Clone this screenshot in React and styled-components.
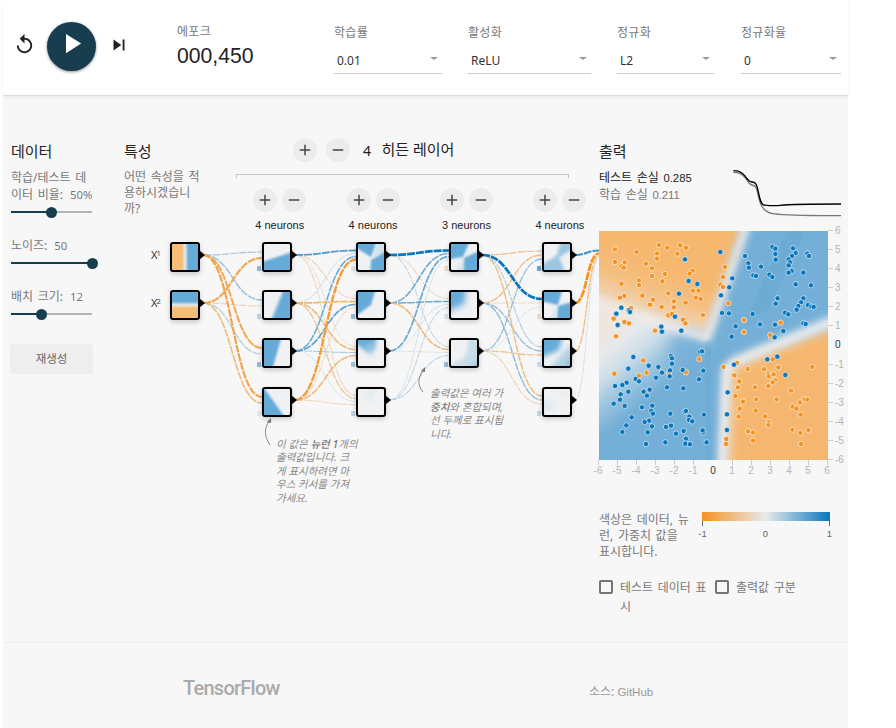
import React from 'react';
import styled, { createGlobalStyle } from 'styled-components';

const ORANGE = [245, 147, 34];
const NEUTRAL = [232, 234, 235];
const BLUE = [8, 119, 189];

const GlobalStyle = createGlobalStyle`
  *, *::before, *::after { box-sizing: border-box; }
  body {
    margin: 0;
    background: #fff;
    color: #222;
    font-family: "Noto Sans", "Noto Sans CJK KR", sans-serif;
    font-size: 12px;
    overflow: hidden;
  }
  filter { color-interpolation-filters: sRGB; }
`;

const Page = styled.div`
  display: flex;
  flex-direction: column;
  width: 845px;
  height: 728px;
  margin-left: 3px;
  background: #f7f7f7;
`;

const Header = styled.header`
  display: flex;
  align-items: flex-start;
  height: 96px;
  flex: none;
  background: #fff;
  border-bottom: 1px solid #dcdcdc;
  box-shadow: 0 1px 3px rgba(0, 0, 0, 0.06);
`;

const Playback = styled.div`
  display: flex;
  align-items: center;
  width: 174px;
  height: 49px;
  margin-top: 22px;
  padding-left: 10px;
`;

const IconButton = styled.button`
  display: flex;
  padding: 0;
  margin: 0 0 4px;
  border: 0;
  background: none;
  color: #222;
`;

const PlayButton = styled.button`
  display: flex;
  align-items: center;
  justify-content: center;
  width: 49px;
  height: 49px;
  margin: 0 12px 0 11px;
  padding: 0 0 6px;
  border: 0;
  border-radius: 50%;
  background: #183d4e;
  color: #fff;
  box-shadow: 0 1px 3px rgba(0, 0, 0, 0.45);
`;

const Epoch = styled.div`
  display: flex;
  flex-direction: column;
  width: 157px;
  padding-top: 24px;
`;

const Label = styled.span`
  font-size: 12px;
  line-height: 16px;
  letter-spacing: 0.3px;
  color: #777;
`;

const EpochValue = styled.span`
  font: 21.2px/24px "Liberation Sans", sans-serif;
  margin-top: 4px;
  color: #222;
`;

const Field = styled.div`
  display: flex;
  flex-direction: column;
  width: ${(p) => p.$width}px;
  margin-right: ${(p) => p.$gap}px;
  padding-top: 25px;
`;

const Select = styled.div`
  display: flex;
  justify-content: space-between;
  height: 25px;
  margin-top: 8px;
  padding: 0 4px 0 3px;
  border-bottom: 1px solid #ccc;
  font-size: 12px;
  line-height: 24px;
  color: #333;
`;

const Caret = styled.span`
  width: 0;
  height: 0;
  margin-top: 8px;
  border: 4px solid transparent;
  border-top: 3px solid #999;
  border-bottom: 0;
`;

const Main = styled.main`
  display: flex;
  height: 546px;
  flex: none;
`;

const Heading = styled.h4`
  margin: 0;
  font-size: 15px;
  line-height: 20px;
  font-weight: 400;
  color: #222;
`;

const Line = styled.span`
  display: block;
  height: ${(p) => p.$h || 16}px;
  font-size: 12px;
  line-height: ${(p) => p.$h || 16}px;
  color: ${(p) => p.$color || '#777'};
  white-space: pre;
  word-spacing: 1.5px;
`;

const DataColumn = styled.section`
  display: flex;
  flex-direction: column;
  width: 121px;
  padding: 45px 0 0 8px;
`;

const SliderGroup = styled.div`
  display: flex;
  flex-direction: column;
  margin-bottom: ${(p) => p.$after}px;
`;

const SliderValue = styled.span`
  margin-left: 7px;
  font-size: 11.3px;
`;

const Track = styled.div`
  display: flex;
  align-items: center;
  width: 81px;
  height: 12px;
  margin-top: 3px;
  background: linear-gradient(#b4b4b4, #b4b4b4) center / 100% 2px no-repeat;
`;

const TrackFill = styled.div`
  display: flex;
  align-items: center;
  justify-content: flex-end;
  flex: none;
  width: ${(p) => p.$value}px;
  height: 2px;
  background: #183d4e;
`;

const Knob = styled.span`
  width: 11px;
  height: 11px;
  margin-right: -6px;
  flex: none;
  border-radius: 50%;
  background: #183d4e;
`;

const Regenerate = styled.button`
  width: 83px;
  height: 30px;
  margin: 0 0 0 -1px;
  padding: 0;
  border: 0;
  border-radius: 2px;
  background: #eee;
  color: #666;
  font: 11.5px/30px "Noto Sans", "Noto Sans CJK KR", sans-serif;
`;

const NetworkColumn = styled.section`
  width: 475px;
  display: flex;
  flex-direction: column;
`;

const NetworkHead = styled.div`
  display: flex;
  height: 144px;
`;

const Features = styled.div`
  flex: none;
  width: 109px;
  padding-top: 45px;
`;

const FeatureText = styled.div`
  margin-top: 8px;
`;

const Layers = styled.div`
  display: flex;
  flex: none;
  flex-direction: column;
  width: 374px;
`;

const LayersTitle = styled.div`
  display: flex;
  align-items: center;
  gap: 8.5px;
  height: 24px;
  margin: 42px 0 0 60px;

  h4 { margin-bottom: 2px; }
`;

const LayerCount = styled.span`
  margin: 0 2px 0 5px;
  font-size: 14px;
`;

const Round = styled.button`
  display: flex;
  align-items: center;
  justify-content: center;
  width: 24px;
  height: 24px;
  padding: 0;
  border: 0;
  border-radius: 50%;
  background: #ececec;
  color: #444;
`;

const Bracket = styled.div`
  width: 333px;
  height: 4px;
  margin: 12px 0 10px 3px;
  border: 1px solid #c4c4c4;
  border-bottom: 0;
`;

const LayerControls = styled.div`
  display: grid;
  grid-template-columns: repeat(4, 93.4px);
`;

const LayerControl = styled.div`
  display: flex;
  flex-wrap: wrap;
  justify-content: center;
  gap: 5px;
`;

const NeuronCount = styled.span`
  width: 100%;
  margin-top: 1px;
  text-align: center;
  font: 11px/14px "Liberation Sans", sans-serif;
  color: #222;
`;

const Diagram = styled.div`
  position: relative;
  width: 475px;
  height: 280px;
`;

const Links = styled.svg`
  position: absolute;
  left: 0;
  top: 0;
  overflow: visible;
`;

const Node = styled.div`
  position: absolute;
  left: ${(p) => p.$x}px;
  top: ${(p) => p.$y}px;
  width: 30px;
  height: 30px;
  border: 2px solid #000;
  border-radius: 3px;
  background: #f0f1f3;
  box-shadow: 0 2px 5px rgba(0, 0, 0, 0.2);

  svg { display: block; }

  &::after {
    content: "";
    position: absolute;
    left: 27px;
    top: 6px;
    border: 5px solid transparent;
    border-left: 6px solid #000;
    border-right: 0;
  }
`;

const FeatureName = styled.span`
  position: absolute;
  left: 27px;
  top: ${(p) => p.$y}px;
  font-size: 11px;
  line-height: 14px;
  color: #333;

  sup {
    font-size: 7.5px;
    line-height: 0;
    vertical-align: 3px;
    margin-left: -1px;
  }
`;

const Callout = styled.div`
  position: absolute;
  left: ${(p) => p.$x}px;
  top: ${(p) => p.$y}px;
  font-size: 10.5px;
  line-height: 13.6px;
  font-style: italic;
  color: #888;
  white-space: pre;

  b { font-weight: 500; color: #777; }
`;

const OutputColumn = styled.section`
  display: flex;
  flex-direction: column;
  width: 249px;
  padding-top: 45px;
`;

const Metrics = styled.div`
  display: flex;
  justify-content: space-between;
  height: 70px;
`;

const Loss = styled.div`
  padding-top: 8px;
`;

const Num = styled.span`
  font: ${(p) => p.$size || 11.3}px "Liberation Sans", sans-serif;
`;

const LossChart = styled.svg`
  margin: 7px 5px 0 0;
`;

const Heatmap = styled.svg`
  display: block;
  flex: none;
  overflow: visible;
`;

const LegendRow = styled.div`
  display: flex;
  gap: 8px;
  margin-top: 32px;
`;

const LegendText = styled.div`
  width: 92px;
`;

const LegendScale = styled.svg`
  overflow: visible;
`;

const Options = styled.div`
  display: flex;
  margin-top: 18px;
`;

const Option = styled.label`
  display: flex;
  width: ${(p) => p.$width}px;
`;

const Box = styled.span`
  width: 14px;
  height: 14px;
  margin: 2px 7px 0 0;
  flex: none;
  border: 2px solid #757575;
  border-radius: 2px;
`;

const Footer = styled.footer`
  display: flex;
  flex: 1;
  align-items: flex-start;
  border-top: 1px solid #ececec;
  padding: 32px 0 0 180px;
`;

const Wordmark = styled.span`
  width: 406px;
  font: 500 20px/26px Roboto, sans-serif;
  letter-spacing: -0.75px;
  color: #aaa;
`;

const Source = styled.span`
  margin-top: 8px;
  font-size: 12px;
  line-height: 18px;
  color: #999;
`;

const mix = (v) => {
  const end = v < 0 ? ORANGE : BLUE;
  const t = Math.abs(v);
  return `rgb(${NEUTRAL.map((c, i) => Math.round(c + (end[i] - c) * t)).join(',')})`;
};

const COLUMN_X = [46, 138, 232, 325, 418];
const ROW_Y = [2, 50, 98, 147];

// weights[layer][source][destination], negative is orange
const WEIGHTS = [
  [[0.3, 0.4, -0.75, -0.8], [-0.78, -0.25, 0.28, -0.55]],
  [
    [0.68, -0.25, -0.15, -0.22],
    [0.16, -0.6, -0.55, -0.4],
    [0.55, 0.6, 0.28, 0.1],
    [-0.88, -0.2, -0.55, -0.22],
  ],
  [
    [1, -0.22, 0.18],
    [0.55, 0.55, -0.55],
    [0.58, 0.1, 0.07],
    [0.1, 0.18, 0.22],
  ],
  [
    [-0.42, 1, 0.25, -0.5],
    [-0.5, -0.22, 0.4, 0.42],
    [0.38, 0.07, -0.42, -0.28],
  ],
  [[0.75], [-1], [-0.5], [0.1]],
];

const BIASES = [
  [0.4, 0.2, 0.4, 0.02],
  [0.08, 0.38, 0.3, 0.2],
  [-0.15, 0.05, 0.38],
  [0.55, -0.15, 0.12, 0.16],
];

const N = '#66aad8';
const P = '#9cc6e2';
const F = '#d3e3ed';

// shapes drawn in the 26 x 26 preview of each neuron: [points, fill, blur]
const PREVIEWS = [
  [
    [['-8,20 34,6 34,34 -8,34', N, 1]],
    [['22,-8 34,-8 34,34 5,34', N, 1.4]],
    [['-8,-8 19,-8 7,34 -8,34', N, 1]],
    [['-8,-10 0,-1 25,34 -8,34', N, 1]],
  ],
  [
    [['-8,-8 19,-8 17,3 13,13 -8,0', N, 1], ['21,-8 34,-8 34,8 15,12', F, 1.5], ['13,16 34,4 34,34 12,34', N, 1]],
    [['-8,-8 19,-8 13,13 -8,28', N, 1.2]],
    [['-8,-8 20,-8 16,8 10,12 -8,0', N, 2], ['6,4 18,4 13,16', P, 2.5]],
    [['12,-8 20,-8 13,13 9,10', '#e0eaf0', 2]],
  ],
  [
    [['-8,-8 21,-8 12,13 -8,16', N, 1.1], ['13,14 34,4 34,34 11,34', N, 1.1], ['12,12 2,34 12,34', F, 2]],
    [['-12,-12 17,-12 13,12 -12,24', N, 3.2]],
    [['20,-8 34,-8 34,34 -8,34 -8,30 14,17', '#c9deeb', 1.8], ['36,12 36,36 16,36', '#7db5da', 4]],
  ],
  [
    [['18,-8 34,-8 34,2 12,15', P, 1.5], ['-8,24 14,11 24,34 -8,34', P, 1.8]],
    [['-8,-8 20,-8 14,13 -8,8', N, 1.1], ['14,14 34,8 34,34 12,34', N, 1.1], ['12,14 4,34 12,34', F, 1.5]],
    [['-8,-8 20,-8 15,10 -8,20', N, 2.6], ['28,3 34,34 0,34 14,18', '#b5d3e7', 2], ['34,8 34,34 18,34', '#7db5da', 3]],
    [['-8,8 8,13 11,19 -8,28', '#dfe9ef', 2], ['16,0 24,2 20,10', '#e6ecf0', 2]],
  ],
];

// plot points in thirds of a pixel
const UPPER_ORANGE = [[75,343],[140,351],[207,330],[232,338],[270,331],[288,338],[262,356],[201,355],[201,371],[75,381],[104,382],[94,394],[101,398],[168,386],[186,400],[186,423],[225,417],[217,439],[147,436],[147,450],[94,446],[308,407],[299,416],[405,396],[399,426],[391,449],[399,456],[309,467],[326,467],[318,488],[332,492],[235,475],[157,482],[103,483],[90,488],[189,494],[180,509],[252,499],[287,503],[215,516],[252,517],[123,519],[235,541],[246,537],[339,540],[279,554],[286,565],[71,551],[103,561],[117,565],[195,587],[78,604],[415,505],[462,555],[462,591],[572,563],[544,606],[541,600]];
const UPPER_BLUE = [[285,373],[296,438],[322,447],[267,476],[94,518],[117,526],[120,531],[79,536],[83,570],[255,545],[214,575],[216,590],[274,587],[391,351],[427,430],[418,457],[393,481],[396,534],[417,535],[488,537],[437,574],[425,605],[510,568],[465,363],[475,385],[477,398],[513,395],[490,421],[498,423],[538,419],[547,426],[547,336],[556,341],[556,357],[557,374],[609,340],[617,354],[606,363],[652,356],[657,363],[596,373],[600,382],[596,391],[605,408],[596,413],[640,413],[617,448],[663,451],[563,490],[557,506],[640,490],[633,502],[625,513],[620,524],[654,510],[664,515],[671,516],[585,533],[595,538],[555,569],[580,588],[554,607],[640,565],[647,567]];
const LOWER_ORANGE = [[160,76],[73,116],[147,122],[170,113],[237,114],[288,112],[328,72],[400,96],[441,84],[473,102],[522,102],[565,97],[548,73],[667,96],[433,121],[448,139],[535,117],[536,124],[551,118],[555,136],[548,142],[535,153],[444,157],[495,157],[603,167],[436,183],[459,200],[499,193],[560,193],[644,193],[652,194],[630,202],[608,215],[619,221],[449,221],[497,227],[632,239],[446,245],[525,244],[537,262],[535,270],[474,289],[489,292],[607,284],[655,285],[631,294],[409,312],[408,327],[489,317],[633,327]];
const LOWER_BLUE = [[130,66],[115,101],[176,92],[205,96],[243,63],[246,70],[246,86],[240,106],[216,113],[198,128],[239,124],[278,105],[330,50],[336,49],[340,107],[327,133],[137,132],[147,139],[110,143],[97,150],[75,153],[115,170],[92,178],[90,194],[71,206],[104,213],[161,170],[179,164],[171,182],[231,157],[280,160],[156,217],[187,212],[184,228],[189,236],[125,247],[109,271],[97,291],[241,236],[284,230],[288,228],[342,239],[298,245],[297,255],[307,259],[177,257],[164,261],[186,274],[173,292],[228,276],[243,272],[258,296],[281,288],[340,292],[338,286],[288,311],[286,326],[300,328],[168,327],[226,322],[350,322],[532,73],[562,65],[432,89],[413,172],[411,238],[411,285],[586,120]];

const HEAT_TICKS = [-6, -5, -4, -3, -2, -1, 0, 1, 2, 3, 4, 5, 6];

const Icon = ({ size, d }) => (
  <svg width={size} height={size} viewBox="0 0 24 24" fill="currentColor">
    <path d={d} />
  </svg>
);

const Plus = () => <Icon size={18} d="M19 13h-6v6h-2v-6H5v-2h6V5h2v6h6v2z" />;
const Minus = () => <Icon size={18} d="M19 13H5v-2h14v2z" />;

const LinkLayer = () => (
  <Links width="475" height="280">
    {WEIGHTS.map((layer, l) => {
      const links = layer.flatMap((targets, s) =>
        targets.map((w, t) => {
          const x1 = COLUMN_X[l] + 33;
          const y1 = ROW_Y[s] + 13;
          const x2 = l === 4 ? 475 : COLUMN_X[l + 1];
          const n = layer.length;
          const y2 = ROW_Y[t] + 13 + ((s - (n - 1) / 2) / n) * 12;
          const mx = (x1 + x2) / 2;
          return { w, key: `${l}-${s}-${t}`, d: `M${x1},${y1}C${mx},${y1} ${mx},${y2} ${x2},${y2}` };
        })
      );
      return links
        .sort((a, b) => Math.abs(a.w) - Math.abs(b.w))
        .map(({ key, w, d }) => (
          <path key={key} d={d} fill="none" stroke={mix(w)} strokeWidth={0.9 + 1.8 * Math.abs(w) ** 1.6} strokeDasharray="8 1" />
        ));
    })}
    {BIASES.map((layer, l) =>
      layer.map((b, i) => (
        <rect key={`${l}-${i}`} x={COLUMN_X[l + 1] - 5} y={ROW_Y[i] + 24} width="4" height="5" fill={mix(b)} />
      ))
    )}
    <g fill="none" stroke="#888">
      <path d="M146,205C140,196 140,189 145,181" />
      <path d="M299,152C293,145 294,138 299,130" />
    </g>
    <path d="M147,178l-4,4 4,1z M301,127l-4,4 4,1z" fill="#777" />
  </Links>
);

const Preview = ({ shapes, id }) => (
  <svg width="26" height="26">
    {shapes.map(([points, fill, blur], i) => (
      <g key={i}>
        <filter id={`${id}-${i}`} x="-50%" y="-50%" width="200%" height="200%">
          <feGaussianBlur stdDeviation={blur} />
        </filter>
        <polygon points={points} fill={fill} filter={`url(#${id}-${i})`} />
      </g>
    ))}
  </svg>
);

const FeaturePreview = ({ id, vertical }) => (
  <svg width="26" height="26">
    <linearGradient id={id} x1={vertical ? 0 : 1} y1="0" x2="0" y2={vertical ? 1 : 0}>
      <stop offset="0.36" stopColor={N} />
      <stop offset="0.5" stopColor="#e8eaeb" />
      <stop offset="0.62" stopColor="#f7bd78" />
    </linearGradient>
    <rect width="26" height="26" fill={`url(#${id})`} />
  </svg>
);

const Dots = ({ points, fill }) =>
  points.map(([x, y], i) => (
    <circle key={i} cx={x} cy={y} r="8" fill={fill} stroke="#fff" strokeWidth="3" strokeOpacity="0.6" />
  ));

const OutputPlot = () => (
  <Heatmap width="249" height="249">
    <defs>
      <clipPath id="plot"><rect width="229" height="229" /></clipPath>
      <filter id="fine" x="-30%" y="-30%" width="160%" height="160%"><feGaussianBlur stdDeviation="3" /></filter>
      <filter id="soft" x="-30%" y="-30%" width="160%" height="160%"><feGaussianBlur stdDeviation="4.5" /></filter>
      <filter id="softer" x="-30%" y="-30%" width="160%" height="160%"><feGaussianBlur stdDeviation="7" /></filter>
      <linearGradient id="lowerLeft" gradientUnits="userSpaceOnUse" x1="16" y1="92" x2="72" y2="162">
        <stop offset="0" stopColor="#efe6dd" />
        <stop offset="0.2" stopColor="#e6e9eb" />
        <stop offset="0.4" stopColor="#cfdfe9" />
        <stop offset="0.62" stopColor="#9fc7e0" />
        <stop offset="0.9" stopColor="#74afd7" />
      </linearGradient>
      <linearGradient id="upperLeft" gradientUnits="userSpaceOnUse" x1="80" y1="42" x2="62" y2="92">
        <stop offset="0" stopColor="#f6b76f" />
        <stop offset="0.5" stopColor="#f4c083" />
        <stop offset="1" stopColor="#eedcc8" />
      </linearGradient>
    </defs>
    <g clipPath="url(#plot)">
      <rect width="229" height="229" fill="#74afd7" />
      <polygon points="0,60 110,98 112,229 0,229" fill="url(#lowerLeft)" />
      <polygon points="113,72 108,140 66,132 74,108" fill="#74afd7" filter="url(#softer)" opacity="0.8" />
      <polygon points="-20,-20 149,-20 108,104 -20,60" fill="url(#upperLeft)" filter="url(#soft)" />
      <path d="M-10,69L108,107L149,-10" fill="none" stroke="#efeceb" strokeWidth="10" opacity="0.5" filter="url(#soft)" />
      <path d="M40,86L108,107L149,-10" fill="none" stroke="#efeceb" strokeWidth="5" filter="url(#fine)" />
      <polygon points="129,134 260,86 260,250 124,250" fill="#f5b76f" filter="url(#soft)" />
      <path d="M125,240L129,141Q131,133 147,127L240,88" fill="none" stroke="#eeeeef" strokeWidth="14" opacity="0.5" filter="url(#soft)" />
      <path d="M123,240L127,141Q129,133 145,127L240,88" fill="none" stroke="#eeeeef" strokeWidth="7" filter="url(#fine)" />
      <polygon points="188,0 206,0 168,80 148,87" fill="#4c99cf" opacity="0.18" />
      <rect x="106" y="110" width="6" height="119" fill="#4c99cf" opacity="0.14" />
      <g transform="translate(-9 -96) scale(0.33333)">
        <Dots points={UPPER_ORANGE} fill="#f59322" />
        <Dots points={UPPER_BLUE} fill="#0877bd" />
      </g>
      <g transform="translate(-9 104) scale(0.33333)">
        <Dots points={LOWER_ORANGE} fill="#f59322" />
        <Dots points={LOWER_BLUE} fill="#0877bd" />
      </g>
    </g>
    <g fontFamily="Liberation Sans, sans-serif" fontSize="10" stroke="none">
      {HEAT_TICKS.map((t) => {
        const p = Math.round(((t + 6) * 229) / 12);
        return (
          <g key={t} fill={t === 0 ? '#333' : '#b5b5b5'}>
            {t !== 0 && <rect x={p - 1} y="229" width="1" height="5" fill="#ccc" />}
            <text x={p - 1} y="243" textAnchor="middle">{t}</text>
            {t !== 0 && <rect x="229" y={229 - p - 1} width="5" height="1" fill="#ccc" />}
            <text x="236" y={229 - p + 2.5}>{t}</text>
          </g>
        );
      })}
    </g>
  </Heatmap>
);

const FIELDS = [
  ['학습률', '0.01', 108, 26],
  ['활성화', 'ReLU', 123, 26],
  ['정규화', 'L2', 97, 27],
  ['정규화율', '0', 100, 0],
];

export default function App() {
  return (
    <>
      <GlobalStyle />
      <Page>
        <Header>
          <Playback>
            <IconButton>
              <Icon size={23} d="M12 5V1L7 6l5 5V7c3.31 0 6 2.69 6 6s-2.69 6-6 6-6-2.69-6-6H4c0 4.42 3.58 8 8 8s8-3.58 8-8-3.58-8-8-8z" />
            </IconButton>
            <PlayButton>
              <Icon size={33} d="M8 5v14l11-7z" />
            </PlayButton>
            <IconButton>
              <Icon size={22} d="M6 18l8.5-6L6 6v12zM16 6v12h2V6h-2z" />
            </IconButton>
          </Playback>
          <Epoch>
            <Label>에포크</Label>
            <EpochValue>000,450</EpochValue>
          </Epoch>
          {FIELDS.map(([name, value, width, gap]) => (
            <Field key={name} $width={width} $gap={gap}>
              <Label>{name}</Label>
              <Select>{value}<Caret /></Select>
            </Field>
          ))}
        </Header>

        <Main>
          <DataColumn>
            <Heading>데이터</Heading>
            <SliderGroup $after={19}>
              <Line $h={8} />
              <Line $h={17}>학습/테스트 데</Line>
              <Line $h={17}>이터 비율:<SliderValue>50%</SliderValue></Line>
              <Track><TrackFill $value={40}><Knob /></TrackFill></Track>
            </SliderGroup>
            <SliderGroup $after={19}>
              <Line $h={17}>노이즈:<SliderValue>50</SliderValue></Line>
              <Track><TrackFill $value={81}><Knob /></TrackFill></Track>
            </SliderGroup>
            <SliderGroup $after={24}>
              <Line $h={17}>배치 크기:<SliderValue>12</SliderValue></Line>
              <Track><TrackFill $value={30}><Knob /></TrackFill></Track>
            </SliderGroup>
            <Regenerate>재생성</Regenerate>
          </DataColumn>

          <NetworkColumn>
            <NetworkHead>
              <Features>
                <Heading>특성</Heading>
                <FeatureText>
                  <Line>어떤 속성을 적</Line>
                  <Line>용하시겠습니</Line>
                  <Line>까?</Line>
                </FeatureText>
              </Features>
              <Layers>
                <LayersTitle>
                  <Round><Plus /></Round>
                  <Round><Minus /></Round>
                  <LayerCount>4</LayerCount>
                  <Heading>히든 레이어</Heading>
                </LayersTitle>
                <Bracket />
                <LayerControls>
                  {[4, 4, 3, 4].map((count, i) => (
                    <LayerControl key={i}>
                      <Round><Plus /></Round>
                      <Round><Minus /></Round>
                      <NeuronCount>{count} neurons</NeuronCount>
                    </LayerControl>
                  ))}
                </LayerControls>
              </Layers>
            </NetworkHead>
            <Diagram>
              <LinkLayer />
              <FeatureName $y={8}>X<sup>1</sup></FeatureName>
              <FeatureName $y={56}>X<sup>2</sup></FeatureName>
              <Node $x={46} $y={2}><FeaturePreview id="x1" /></Node>
              <Node $x={46} $y={50}><FeaturePreview id="x2" vertical /></Node>
              {PREVIEWS.map((layer, l) =>
                layer.map((shapes, i) => (
                  <Node key={`${l}-${i}`} $x={COLUMN_X[l + 1]} $y={ROW_Y[i]}>
                    <Preview shapes={shapes} id={`n${l}${i}`} />
                  </Node>
                ))
              )}
              <Callout $x={152} $y={197.5}>
                이 값은 <b>뉴런 1</b>개의{'\n'}출력값입니다. 크{'\n'}게 표시하려면 마{'\n'}우스 커서를 가져{'\n'}가세요.
              </Callout>
              <Callout $x={306} $y={147}>
                출력값은 여러 가{'\n'}<b>중치</b>와 혼합되며,{'\n'}선 두께로 표시됩{'\n'}니다.
              </Callout>
            </Diagram>
          </NetworkColumn>

          <OutputColumn>
            <Heading>출력</Heading>
            <Metrics>
              <Loss>
                <Line $h={17} $color="#222">테스트 손실 <Num>0.285</Num></Line>
                <Line $h={17}>학습 손실 <Num>0.211</Num></Line>
              </Loss>
              <LossChart width="110" height="50" viewBox="429 99 330 150" fill="none" strokeWidth="4">
                <path d="M430,112C446,112 455,116 464,126S476,148 486,150S499,154 504,178S515,228 545,235S620,241 753,242" stroke="#777" />
                <path d="M430,107C446,107 456,112 464,122S476,140 486,141S499,144 504,166S512,209 522,210S550,213 570,211S650,207 753,207" stroke="#000" />
              </LossChart>
            </Metrics>
            <OutputPlot />
            <LegendRow>
              <LegendText>
                <Line>색상은 데이터, 뉴</Line>
                <Line>런, 가중치 값을</Line>
                <Line>표시합니다.</Line>
              </LegendText>
              <LegendScale width="136" height="30">
                <linearGradient id="legend">
                  <stop offset="0" stopColor="#f59322" />
                  <stop offset="0.5" stopColor="#e8eaeb" />
                  <stop offset="1" stopColor="#0877bd" />
                </linearGradient>
                <rect x="3" y="0" width="128" height="9" fill="url(#legend)" />
                <path d="M3.5,9v5M130.5,9v5" stroke="#666" />
                <g fontFamily="Liberation Sans, sans-serif" fontSize="9.5" fill="#666" textAnchor="middle">
                  <text x="3.5" y="25">-1</text>
                  <text x="66.5" y="25">0</text>
                  <text x="130.5" y="25">1</text>
                </g>
              </LegendScale>
            </LegendRow>
            <Options>
              <Option $width={116}>
                <Box />
                <div>
                  <Line $h={19}>테스트 데이터 표</Line>
                  <Line $h={19}>시</Line>
                </div>
              </Option>
              <Option $width={120}>
                <Box />
                <Line $h={19}>출력값 구분</Line>
              </Option>
            </Options>
          </OutputColumn>
        </Main>

        <Footer>
          <Wordmark>TensorFlow</Wordmark>
          <Source>소스: <Num $size={11.5}>GitHub</Num></Source>
        </Footer>
      </Page>
    </>
  );
}
